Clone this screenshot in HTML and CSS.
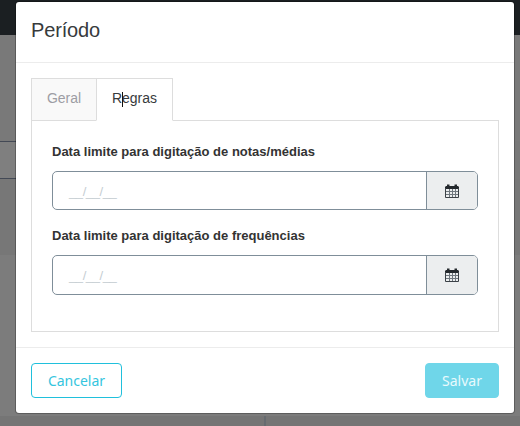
FILE: index.html
```html
<!DOCTYPE html>
<html lang="pt-BR">
<head>
<meta charset="utf-8">
<title>Período</title>
<link rel="stylesheet" href="styles.css">
</head>
<body>
<div class="page">
  <div class="topbar"></div>
  <div class="block"></div>
  <div class="strip"></div>
  <div class="block-mid"></div>
  <div class="block-low"></div>
  <div class="columns"><div></div><div></div></div>
</div>
<section class="modal">
  <header class="modal-header"><h1>Período</h1></header>
  <div class="modal-body">
    <nav class="tabs">
      <a class="tab">Geral</a>
      <a class="tab active">Regras<span class="caret"></span></a>
    </nav>
    <div class="panel">
      <div class="field">
        <label>Data limite para digitação de notas/médias</label>
        <div class="group">
          <div class="input">__/__/__</div>
          <div class="addon"><svg width="14" height="14" viewBox="0 0 14 14"><path fill="#24292d" d="M2 0.500h2.500v3h-2.500zM9.500 0.500h2.500v3h-2.500zM1 2h12l1 1v2h-14v-2z"/><path fill="none" stroke="#3b4147" d="M.5 4V13.500H13.500V4"/><path fill="none" stroke="#6f777e" d="M4.500 5V13M7.500 5V13M10.500 5V13M1 7.500H13M1 10.500H13"/></svg></div>
        </div>
      </div>
      <div class="field second">
        <label>Data limite para digitação de frequências</label>
        <div class="group">
          <div class="input">__/__/__</div>
          <div class="addon"><svg width="14" height="14" viewBox="0 0 14 14"><path fill="#24292d" d="M2 0.500h2.500v3h-2.500zM9.500 0.500h2.500v3h-2.500zM1 2h12l1 1v2h-14v-2z"/><path fill="none" stroke="#3b4147" d="M.5 4V13.500H13.500V4"/><path fill="none" stroke="#6f777e" d="M4.500 5V13M7.500 5V13M10.500 5V13M1 7.500H13M1 10.500H13"/></svg></div>
        </div>
      </div>
    </div>
  </div>
  <footer class="modal-footer">
    <button class="btn cancel">Cancelar</button>
    <button class="btn save">Salvar</button>
  </footer>
</section>
</body>
</html>
```
FILE: styles.css
```css
* { box-sizing: border-box; }
body {
  margin: 0;
  height: 426px;
  overflow: hidden;
  background: #7b7b7b;
  font-family: "Liberation Sans", sans-serif;
  font-size: 14px;
  color: #373a3c;
}
.page { height: 426px; display: flex; flex-direction: column; background: #787878; }
.topbar { height: 35px; background: #1b1f22; }
.block { height: 106px; background: #797979; }
.strip { height: 38px; width: 480px; background: #7f7f7f; border: solid #434955; border-width: 1px 0; }
.block-mid { height: 76px; background: #777; }
.block-low { height: 161px; background: #7c7c7c; }
.columns { flex: 1; display: grid; grid-template-columns: 266px 1fr; background: #757575; }
.columns div:first-child { border-right: 2px solid #666b70; }
/* The dialog floats over the dimmed page */
.modal {
  position: absolute;
  left: 16px;
  top: 2px;
  width: 498px;
  height: 411px;
  background: #fff;
  border-radius: 3px;
  box-shadow: 0 0 0 1px rgba(0, 0, 0, .25);
}
.modal-header { height: 61px; padding: 15px; border-bottom: 1px solid #ececec; }
h1 { margin: 0; font-size: 20px; font-weight: 400; line-height: 26px; letter-spacing: -.15px; }
.modal-body { height: 284px; padding: 15px 15px 0; }
.tabs { display: flex; height: 43px; margin-bottom: -1px; position: relative; }
.tab {
  height: 43px;
  border: 1px solid #ddd;
  line-height: 38px;
  width: 66px;
  text-align: center;
  color: #9d9da4;
  background: #f9f9f9;
}
.tab.active {
  width: 77px;
  margin-left: -1px;
  color: #373a3c;
  background: #fff;
  border-bottom-color: #fff;
  position: relative;
}
.caret { position: absolute; left: 25px; top: 13px; width: 1px; height: 15px; background: #111; }
.panel { height: 212px; border: 1px solid #ddd; padding: 20px; }
.field { height: 84px; }
label { display: block; height: 30px; line-height: 21px; font-size: 13px; font-weight: 700; color: #333; }
.group { display: flex; height: 39px; border: 1px solid #7f8e99; border-radius: 5px; overflow: hidden; }
.second .group { height: 40px; }
.input { flex: 1; padding: 0 16px; line-height: 39px; font-size: 13px; letter-spacing: -.4px; color: #c5cdd2; }
.addon {
  width: 51px;
  background: #eceeef;
  border-left: 1px solid #7f8e99;
  display: flex;
  align-items: flex-start;
  justify-content: center;
  padding-top: 12px;
}
.modal-footer {
  height: 66px;
  border-top: 1px solid #ececec;
  padding: 15px;
  display: flex;
  justify-content: space-between;
}
.btn {
  height: 35px;
  padding: 0;
  border-radius: 4px;
  font: 14px/33px "Noto Sans", sans-serif;
  border: 1px solid #20c0dc;
}
.cancel { width: 91px; background: #fff; color: #35c5de; }
.save { width: 74px; background: #6fd6e9; border-color: #6fd6e9; color: #e9fafd; }
```
